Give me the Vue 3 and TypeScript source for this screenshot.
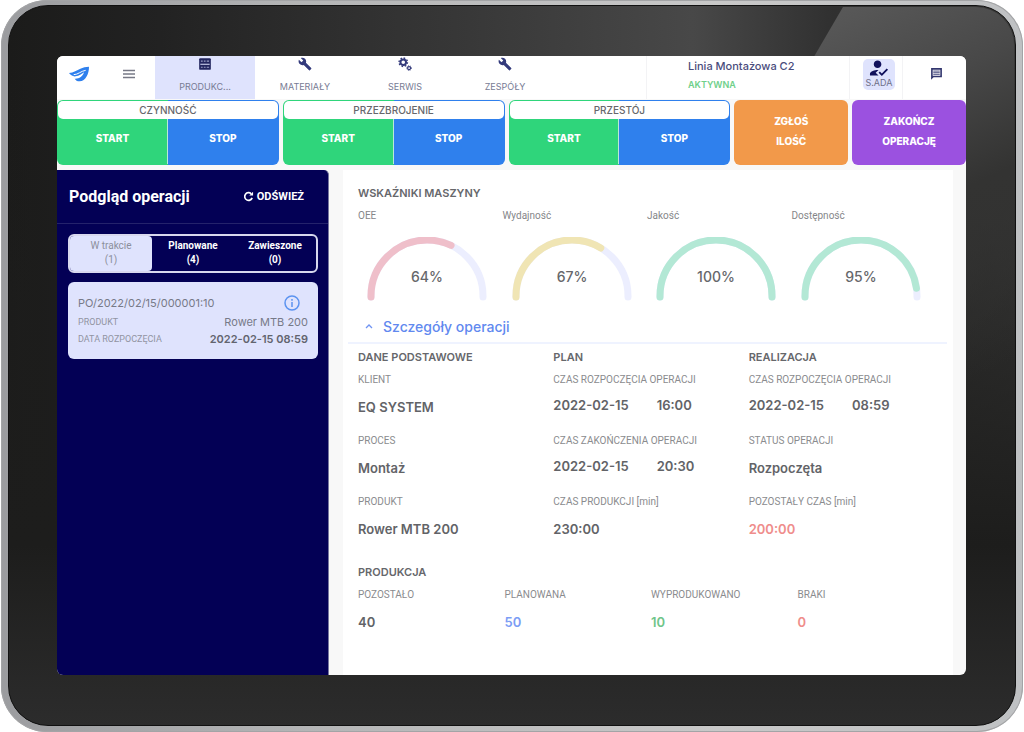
<script setup lang="ts">
interface Tab { label: string; icon: 'list' | 'wrench' | 'gears'; active?: boolean }
interface Gauge { label: string; value: number; color: string }
interface Field { label: string; value: string; time?: string; tone?: string }
interface Column { title: string; fields: Field[] }

const tabs: Tab[] = [
  { label: 'PRODUKC...', icon: 'list', active: true },
  { label: 'MATERIAŁY', icon: 'wrench' },
  { label: 'SERWIS', icon: 'gears' },
  { label: 'ZESPÓŁY', icon: 'wrench' },
]
const groups: string[] = ['CZYNNOŚĆ', 'PRZEZBROJENIE', 'PRZESTÓJ']
const statuses = [
  { label: 'W trakcie', count: 1, active: true },
  { label: 'Planowane', count: 4, active: false },
  { label: 'Zawieszone', count: 0, active: false },
]
const gauges: Gauge[] = [
  { label: 'OEE', value: 64, color: '#efbfca' },
  { label: 'Wydajność', value: 67, color: '#f0e5b4' },
  { label: 'Jakość', value: 100, color: '#b3e8d5' },
  { label: 'Dostępność', value: 95, color: '#b3e8d5' },
]
const columns: Column[] = [
  {
    title: 'DANE PODSTAWOWE',
    fields: [
      { label: 'KLIENT', value: 'EQ SYSTEM' },
      { label: 'PROCES', value: 'Montaż' },
      { label: 'PRODUKT', value: 'Rower MTB 200' },
    ],
  },
  {
    title: 'PLAN',
    fields: [
      { label: 'CZAS ROZPOCZĘCIA OPERACJI', value: '2022-02-15', time: '16:00' },
      { label: 'CZAS ZAKOŃCZENIA OPERACJI', value: '2022-02-15', time: '20:30' },
      { label: 'CZAS PRODUKCJI [min]', value: '230:00' },
    ],
  },
  {
    title: 'REALIZACJA',
    fields: [
      { label: 'CZAS ROZPOCZĘCIA OPERACJI', value: '2022-02-15', time: '08:59' },
      { label: 'STATUS OPERACJI', value: 'Rozpoczęta' },
      { label: 'POZOSTAŁY CZAS [min]', value: '200:00', tone: 'red' },
    ],
  },
]
const production: Field[] = [
  { label: 'POZOSTAŁO', value: '40' },
  { label: 'PLANOWANA', value: '50', tone: 'blue' },
  { label: 'WYPRODUKOWANO', value: '10', tone: 'green' },
  { label: 'BRAKI', value: '0', tone: 'red' },
]
const arc = 'M4 60 V59 A56 56 0 0 1 116 59 V60'
</script>

<template>
  <div class="tablet">
    <div class="bezel">
      <div class="screen">
        <header class="topbar">
          <a class="logo" href="#" aria-label="Start">
            <svg viewBox="0 0 60 46" width="20" height="16">
              <path fill="#2f80ed" d="M0 20C14 19 24 11 34 7C42 3 50 1 60 1C60 22 50 44 32 45C24 45 20 42 17 37C30 38 41 31 45 18C38 23 30 29 20 30C11 31 4 26 0 20Z" />
              <path fill="none" stroke="#fff" stroke-width="3" d="M14 25C27 25 36 14 50 12" />
            </svg>
          </a>
          <button class="menu" type="button" aria-label="Menu">
            <svg viewBox="0 0 12 10" width="12" height="10"><path d="M0 1.500H12M0 5H12M0 8.500H12" stroke="#777986" stroke-width="1.300" /></svg>
          </button>
          <nav class="tabs">
            <button v-for="t in tabs" :key="t.label" type="button" class="tab" :class="{ active: t.active }">
              <svg v-if="t.icon === 'list'" viewBox="0 0 24 24" width="14" height="14">
                <rect x="2" y="2" width="20" height="20" rx="2" fill="#23265f" />
                <path d="M4 12.500H20" stroke="#dfe3fd" stroke-width="1.800" />
                <path d="M5 7H8M10 7H13M15 7H19M5 17.500H8M10 17.500H13M15 17.500H19" stroke="#9da1c9" stroke-width="2" />
              </svg>
              <svg v-else-if="t.icon === 'wrench'" viewBox="0 0 24 24" width="14" height="14">
                <path fill="#343b7c" d="M22.700 19l-9.100-9.100c.9-2.300.4-5-1.500-6.900-2-2-5-2.400-7.400-1.300L9 6 6 9 1.600 4.700C.4 7.100.9 10.100 2.900 12.100c1.900 1.900 4.600 2.400 6.900 1.500l9.100 9.100c.4.4 1 .4 1.400 0l2.300-2.300c.5-.4.5-1.100.1-1.400z" />
              </svg>
              <svg v-else viewBox="0 0 24 24" width="14" height="14" fill="none" stroke="#343b7c">
                <circle cx="9" cy="9" r="4.800" stroke-width="3.400" />
                <circle cx="9" cy="9" r="7.200" stroke-width="2.400" pathLength="16" stroke-dasharray="1 1" />
                <circle cx="19" cy="19" r="2.600" stroke-width="2" />
                <circle cx="19" cy="19" r="4" stroke-width="1.600" pathLength="16" stroke-dasharray="1 1" />
              </svg>
              <span>{{ t.label }}</span>
            </button>
          </nav>
          <div class="machine">
            <strong>Linia Montażowa C2</strong>
            <span>AKTYWNA</span>
          </div>
          <div class="cell user-cell">
            <button type="button" class="user">
              <svg viewBox="2 3 21 18" width="20" height="18"><path fill="#11115c" d="M9 17l3-2.940c-.39-.04-.68-.06-1-.06-2.670 0-8 1.340-8 4v2h9l-3-3zm2-5c2.210 0 4-1.790 4-4s-1.790-4-4-4-4 1.790-4 4 1.790 4 4 4zm4.470 8.500L12 17l1.400-1.410 2.070 2.080 5.130-5.170 1.400 1.410z" /></svg>
              <span>S.ADA</span>
            </button>
          </div>
          <div class="cell chat-cell">
            <button type="button" class="chat" aria-label="Wiadomości">
              <svg viewBox="0 0 24 24" width="13" height="13" fill="none" stroke="#33376f"><path d="M3.500 3.500H20.500V17.500H6L3.500 20Z" stroke-width="3" /><path d="M6 7.500H18M6 10.500H18M6 13.500H18" stroke-width="1.600" /></svg>
            </button>
          </div>
        </header>

        <section class="actions">
          <div v-for="g in groups" :key="g" class="group">
            <h2>{{ g }}</h2>
            <button type="button" class="start" :aria-label="`${g} start`">START</button>
            <button type="button" class="stop" :aria-label="`${g} stop`">STOP</button>
          </div>
          <button type="button" class="big orange">ZGŁOŚ<br />ILOŚĆ</button>
          <button type="button" class="big purple">ZAKOŃCZ<br />OPERACJĘ</button>
        </section>

        <div class="body">
          <aside class="sidebar">
            <div class="side-head">
              <h1>Podgląd operacji</h1>
              <button type="button" class="refresh">
                <svg viewBox="0 0 12 12" width="11" height="11" fill="none" stroke="#fff" stroke-width="1.800"><path d="M10 7.500A4.200 4.200 0 1 1 9 3" /><path d="M11 .8V5H6.800Z" fill="#fff" stroke="none" /></svg>
                ODŚWIEŻ
              </button>
            </div>
            <div class="side-body">
              <div class="statuses">
                <button v-for="s in statuses" :key="s.label" type="button" :class="{ active: s.active }">
                  {{ s.label }}<br />({{ s.count }})
                </button>
              </div>
              <article class="card">
                <div class="row order">
                  <span>PO/2022/02/15/000001:10</span>
                  <button type="button" aria-label="Informacje">
                    <svg viewBox="0 0 16 16" width="16" height="16" fill="none" stroke="#5c93f0" stroke-width="1.500"><circle cx="8" cy="8" r="7" /><path d="M8 7V12M8 4V5.700" /></svg>
                  </button>
                </div>
                <div class="row"><small>PRODUKT</small><span>Rower MTB 200</span></div>
                <div class="row"><small>DATA ROZPOCZĘCIA</small><b>2022-02-15 08:59</b></div>
              </article>
            </div>
          </aside>

          <main class="panel">
            <h2 class="title">WSKAŹNIKI MASZYNY</h2>
            <div class="gauges">
              <div v-for="g in gauges" :key="g.label" class="gauge">
                <span class="gauge-label">{{ g.label }}</span>
                <svg viewBox="0 0 120 64" width="120" height="64" fill="none" stroke-width="7" stroke-linecap="round">
                  <path :d="arc" stroke="#eceefe" />
                  <path :d="arc" :stroke="g.color" pathLength="100" :stroke-dasharray="`${g.value} 200`" />
                  <text x="60" y="45" text-anchor="middle">{{ g.value }}%</text>
                </svg>
              </div>
            </div>
            <button type="button" class="details" aria-expanded="true">
              <svg viewBox="0 0 8 5" width="8" height="5" fill="none" stroke="#6f93f2" stroke-width="1.300"><path d="M1 4L4 1L7 4" /></svg>
              Szczegóły operacji
            </button>
            <div class="columns">
              <section v-for="c in columns" :key="c.title">
                <h2 class="title">{{ c.title }}</h2>
                <dl v-for="f in c.fields" :key="f.label" class="field">
                  <dt>{{ f.label }}</dt>
                  <dd :class="[f.tone, { dated: f.time }]">{{ f.value }}<time v-if="f.time">{{ f.time }}</time></dd>
                </dl>
              </section>
            </div>
            <h2 class="title prod-title">PRODUKCJA</h2>
            <div class="production">
              <dl v-for="f in production" :key="f.label" class="field">
                <dt>{{ f.label }}</dt>
                <dd :class="f.tone">{{ f.value }}</dd>
              </dl>
            </div>
          </main>
        </div>
      </div>
    </div>
  </div>
</template>

<style>
body { background: #fff; }
#app { min-height: 100vh; display: flex; }
</style>

<style scoped>
* { box-sizing: border-box; margin: 0; }
button { border: 0; padding: 0; background: none; font: inherit; color: inherit; cursor: pointer; }
svg { display: block; flex: none; }

.tablet {
  flex: 1;
  display: flex;
  margin: 0 1px;
  padding: 5px 7px 6px;
  border-radius: 46px;
  background: linear-gradient(90deg, #9b9c9f, #b4b5b6 30%, #c8c8c8 70%, #bfc1c3);
  box-shadow: inset 0 0 0 1px #a3a4a6;
  font-family: Inter, "Open Sans", sans-serif;
  color: #626367;
}
.bezel {
  position: relative;
  flex: 1;
  display: flex;
  padding: 50px 49px 50px 48px;
  border: 1px solid #111;
  border-radius: 40px;
  background:
    linear-gradient(180deg, transparent 8%, #1d1d1c 75%, #2c2c2c),
    linear-gradient(90deg, #1b1b1a, #222 15%, #484848 68%, #303030 82%, #3a3a39);
}
.bezel::before {
  content: "";
  position: absolute;
  top: 1px;
  right: 1px;
  width: 20%;
  height: 60%;
  border-top-right-radius: 38px;
  clip-path: polygon(15% 0, 100% 0, 100% 100%, 0 100%, 0 12%);
  background: linear-gradient(155deg, #5a5a5a, #484848 25%, #333332 48%, transparent 85%);
}
.screen {
  position: relative;
  flex: 1;
  min-width: 0;
  display: flex;
  flex-direction: column;
  overflow: hidden;
  border-radius: 6px;
  background: #f8f8f8;
}

.topbar { display: flex; height: 43px; background: #fff; }
.logo { display: flex; width: 42px; padding: 10px 0 0 12px; }
.menu { display: flex; width: 56px; padding: 13px 0 0 24px; align-items: flex-start; }
.tabs { display: flex; flex: 1; }
.tab { display: flex; flex-direction: column; align-items: center; gap: 10px; width: 100px; padding-top: 1px; font-size: 9px; line-height: 12px; color: #777b94; }
.tab.active { background: #dfe3fd; }
.machine { width: 203px; padding: 2px 0 0 41px; border-left: 1px solid #f3f3f5; }
.machine strong { display: block; font-size: 11px; line-height: 16px; font-weight: 500; color: #4a4c7c; }
.machine span { display: block; margin-top: 5px; font-size: 9px; line-height: 12px; font-weight: 600; color: #6fd08a; }
.cell { display: flex; justify-content: center; border-left: 1px solid #f3f3f5; }
.user-cell { width: 53px; padding-top: 3px; padding-left: 6px; }
.chat-cell { width: 64px; align-items: flex-start; padding: 11px 0 0 3px; }
.user { display: flex; flex-direction: column; align-items: center; width: 32px; height: 31px; border-radius: 5px; background: #dfe3fd; font-size: 9px; line-height: 12px; color: #6e7089; }

.actions { display: grid; grid-template-columns: 222fr 222fr 222fr 114fr 114fr; gap: 4px; height: 65px; margin-top: 1px; font-size: 10px; font-weight: 800; color: #fff; }
.group { display: grid; grid-template-columns: 1fr 1fr; grid-template-rows: 18px 1fr; padding: 1px; border-radius: 6px; background: linear-gradient(90deg, #2fd57b 50%, #2f80ed 50%); overflow: hidden; }
.group h2 { grid-column: 1 / 3; border-radius: 5px; background: #fff; color: #66676b; font-size: 10px; line-height: 18px; font-weight: 500; text-align: center; }
.start, .stop { padding-bottom: 7px; }
.start { border-right: 1px solid #b9e8d8; }
.big { padding-bottom: 3px; border-radius: 6px; line-height: 20px; }
.orange { background: #f2994a; }
.purple { background: #9b51e0; }

.body { flex: 1; display: flex; gap: 14px; padding: 5px 13px 0 0; }
.sidebar { width: 272px; border-radius: 0 5px 0 0; background: #030055; color: #fff; font-family: Roboto, sans-serif; border: 1px solid #77779f; border-width: 0 1px 0 0; }
.side-head { display: flex; justify-content: space-between; align-items: center; height: 54px; padding: 0 24px 0 12px; border-bottom: 1px solid #24226b; }
.side-head h1 { font-size: 16px; line-height: 24px; font-weight: 700; }
.refresh { display: flex; align-items: center; gap: 3px; font-size: 11px; font-weight: 700; }
.side-body { display: grid; gap: 9px; padding: 10px 10px 0 11px; }
.statuses { display: grid; grid-template-columns: repeat(3, 1fr); height: 39px; border: 2px solid #d8d8ee; border-radius: 6px; font-size: 10px; line-height: 14px; font-weight: 700; }
.statuses button { padding-bottom: 2px; }
.statuses .active { border-radius: 4px; background: #dfe3fd; color: #8c8f9c; font-weight: 400; }
.card { display: grid; align-content: start; height: 77px; padding: 11px 10px; border-radius: 6px; background: #dfe3fd; color: #777a88; font-size: 11px; font-family: Inter, sans-serif; }
.row { display: flex; justify-content: space-between; align-items: center; height: 17px; }
.order { height: 20px; padding-right: 8px; }
.row small { font: 9px Roboto, sans-serif; color: #9194a2; }
.row b { font-weight: 600; color: #62646f; }

.panel { flex: 1; min-width: 0; padding: 15px 0 0 15px; background: #fff; }
.title { font-size: 11px; line-height: 16px; font-weight: 600; color: #66676b; }
.gauges { display: grid; grid-template-columns: repeat(4, 1fr); margin: 7px 17px 0 0; }
.gauge-label { display: block; font: 10px/16px Roboto, sans-serif; color: #858689; }
.gauge svg { margin: 13px 0 0 9px; }
.gauge text { fill: #66676b; stroke: none; font-size: 14px; font-weight: 500; }
.details { display: flex; align-items: center; gap: 10px; width: calc(100% + 4px); height: 43px; margin-left: -10px; padding: 9px 0 0 17px; border-bottom: 2px solid #eff3ff; color: #6189ef; font-size: 14px; font-weight: 500; }
.columns { display: grid; grid-template-columns: repeat(3, 1fr); margin: 5px 9px 0 0; }
.columns .title { margin-bottom: 7px; }
.field { height: 61px; }
.field dt { font: 10px/16px Roboto, sans-serif; color: #8a8b8e; }
.field dd { padding-top: 9px; font-size: 13px; line-height: 20px; font-weight: 600; }
.field .dated { padding-top: 7px; }
.field time { margin-left: 28px; }
.field .blue { color: #7c9df5; }
.field .green { color: #6fc58a; }
.field .red { color: #ef8d8b; }
.prod-title { margin-top: 9px; }
.production { display: grid; grid-template-columns: repeat(4, 1fr); margin: 7px 9px 0 0; }
</style>
